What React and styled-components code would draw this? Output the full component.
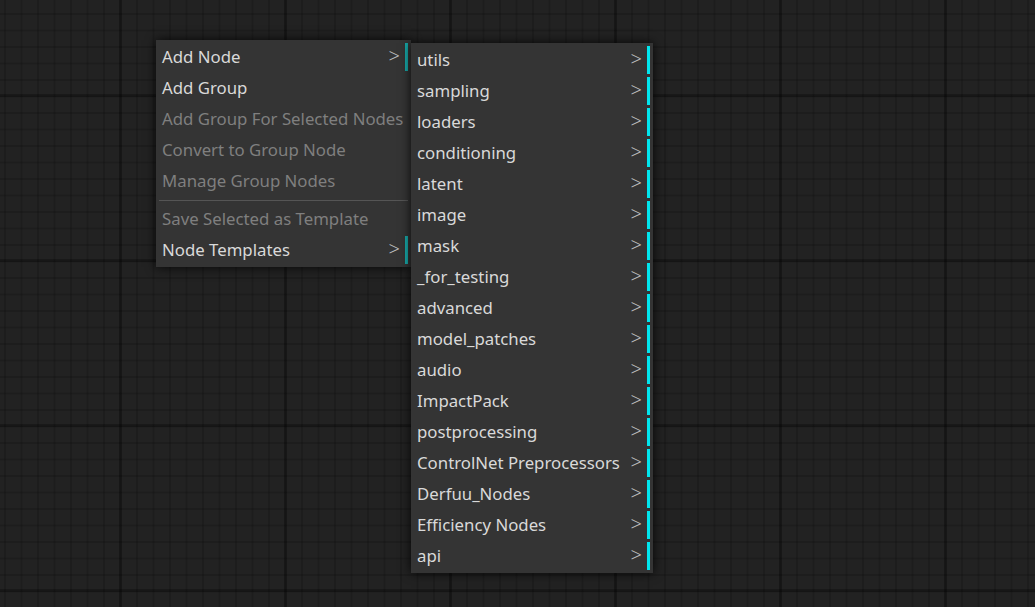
import React from 'react';
import styled, { createGlobalStyle } from 'styled-components';

const GlobalStyle = createGlobalStyle`
  html, body {
    margin: 0;
    padding: 0;
    background: #222;
    overflow: hidden;
  }
`;

const Canvas = styled.div`
  position: relative;
  width: 1035px;
  height: 607px;
  background-color: #222222;
  background-image:
    linear-gradient(90deg, rgba(0, 0, 0, 0.28) 3px, transparent 3px),
    linear-gradient(0deg, rgba(0, 0, 0, 0.28) 3px, transparent 3px),
    linear-gradient(90deg, rgba(0, 0, 0, 0.14) 1.5px, transparent 1.5px),
    linear-gradient(0deg, rgba(0, 0, 0, 0.14) 1.5px, transparent 1.5px);
  background-size: 165px 165px, 165px 165px, 16.5px 16.5px, 16.5px 16.5px;
  background-position: 119px 0, 0 97px, 119.5px 0, 0 97.5px;
  font-family: 'Noto Sans', 'Open Sans', sans-serif;
`;

const Menu = styled.div`
  position: absolute;
  left: ${(p) => p.$left}px;
  top: ${(p) => p.$top}px;
  width: ${(p) => p.$width}px;
  box-sizing: border-box;
  padding: 3px;
  display: flex;
  flex-direction: column;
  gap: 3px;
  background: #343434;
  box-shadow: 0 0 10px rgba(0, 0, 0, 0.85);
`;

const Entry = styled.div`
  display: flex;
  align-items: center;
  justify-content: space-between;
  height: 28px;
  padding: 0 5px 2px 3px;
  box-sizing: border-box;
  font-size: 16.8px;
  white-space: nowrap;
  color: ${(p) => (p.$disabled ? '#7f7f7f' : '#d9d9d9')};
  border-right: 3px solid ${(p) => (p.$sub ? p.$accent : 'transparent')};
`;

const Arrow = styled.span`
  color: #bdbdbd;
  font-size: 20px;
  font-weight: 300;
  margin-top: -1px;
`;

const Separator = styled.div`
  height: 1px;
  margin: 2px 0 1px;
  background: #555;
`;

const mainItems = [
  { label: 'Add Node', sub: true },
  { label: 'Add Group' },
  { label: 'Add Group For Selected Nodes', disabled: true },
  { label: 'Convert to Group Node', disabled: true },
  { label: 'Manage Group Nodes', disabled: true },
  { separator: true },
  { label: 'Save Selected as Template', disabled: true },
  { label: 'Node Templates', sub: true },
];

const categories = [
  'utils',
  'sampling',
  'loaders',
  'conditioning',
  'latent',
  'image',
  'mask',
  '_for_testing',
  'advanced',
  'model_patches',
  'audio',
  'ImpactPack',
  'postprocessing',
  'ControlNet Preprocessors',
  'Derfuu_Nodes',
  'Efficiency Nodes',
  'api',
];

const App = () => {
  return (
    <>
      <GlobalStyle />
      <Canvas>
        <Menu $left={156} $top={40} $width={255}>
          {mainItems.map((item, i) =>
            item.separator ? (
              <Separator key={i} />
            ) : (
              <Entry key={i} $disabled={item.disabled} $sub={item.sub} $accent="#17a6a6">
                <span>{item.label}</span>
                {item.sub && <Arrow>&gt;</Arrow>}
              </Entry>
            )
          )}
        </Menu>

        <Menu $left={411} $top={43} $width={242}>
          {categories.map((name) => (
            <Entry key={name} $sub $accent="#00e6ee">
              <span>{name}</span>
              <Arrow>&gt;</Arrow>
            </Entry>
          ))}
        </Menu>
      </Canvas>
    </>
  );
};

export default App;
